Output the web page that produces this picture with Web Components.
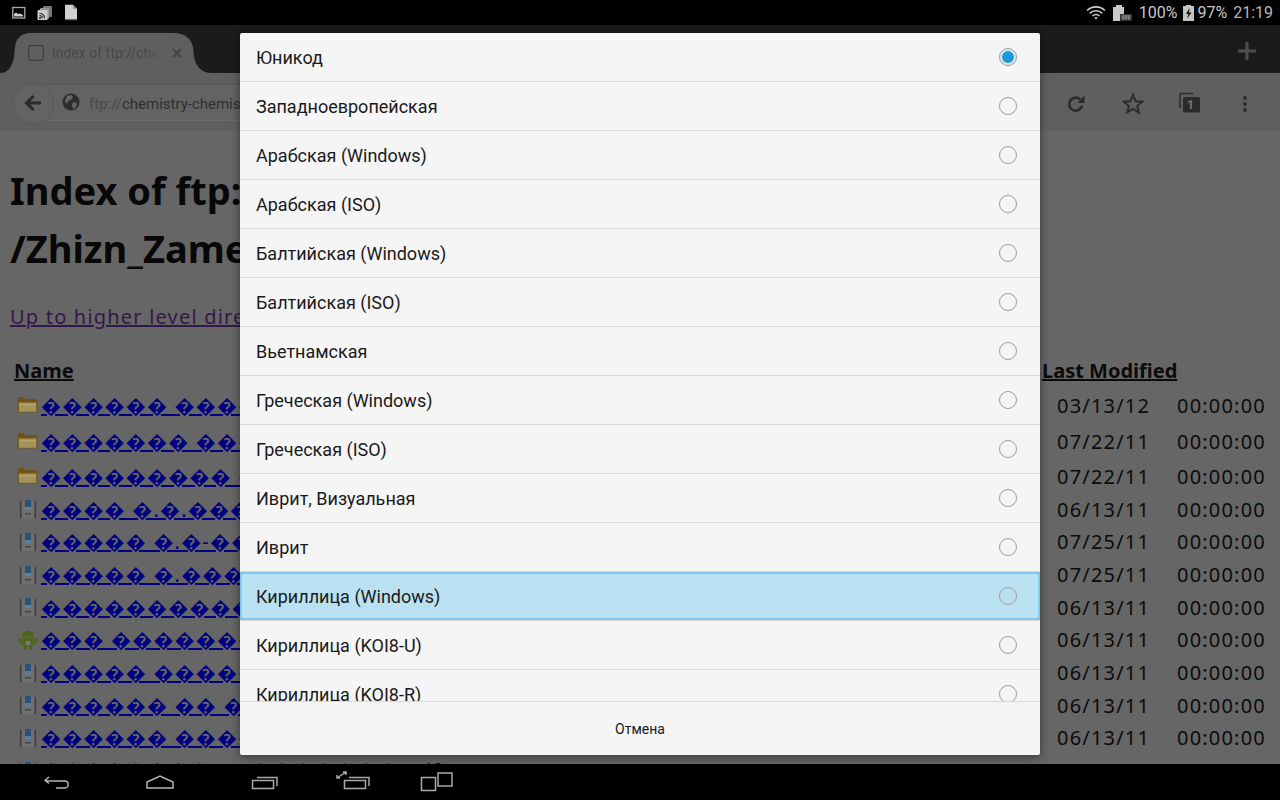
<!DOCTYPE html>
<html><head><meta charset="utf-8"><style>
html,body{margin:0;padding:0;width:1280px;height:800px;overflow:hidden;background:#000}
</style></head><body>
<android-screen></android-screen>
<script>
const sv=(w,h,b,s='')=>`<svg width="${w}" height="${h}" viewBox="0 0 ${w} ${h}" style="display:block;flex:none;${s}">${b}</svg>`;
const def=(n,html,fn)=>customElements.define(n,class extends HTMLElement{constructor(){super();this.attachShadow({mode:'open'}).innerHTML=html;}connectedCallback(){fn&&fn(this)}});
def('status-bar',`<style>:host{display:flex;height:25px;background:#000;color:#c8c8c8;align-items:center;font:16px Roboto,sans-serif;padding:0 7px 0 12px;box-sizing:border-box}
.l{display:flex;gap:11px;align-items:center}.r{margin-left:auto;display:flex;align-items:center}</style>
<div class="l">
${sv(14,14,'<rect x=".8" y="1.5" width="12" height="10.5" fill="none" stroke="#aaa" stroke-width="1.3"/><path d="M2 10.5V8l2-1.5 2 1.5 2-.5 3 1.5v1.5z" fill="#ccc"/>')}
${sv(16,16,'<rect x="6" y="1" width="9" height="11" rx="1" fill="#777"/><rect x="3" y="3" width="9" height="11" rx="1" fill="#999"/><rect x="0.5" y="5" width="10" height="10" rx="1" fill="#ccc"/><g fill="none" stroke="#222" stroke-width="1.1"><path d="M2.5 8.2a5 5 0 0 1 5 5"/><path d="M2.5 10.5a2.7 2.7 0 0 1 2.7 2.7"/></g><circle cx="3" cy="13" r="1" fill="#222"/>')}
${sv(14,17,'<path d="M1 .8h8l4 4v10.5H1z" fill="#d0d0d0"/><path d="M9 .8v4h4z" fill="#888"/><path d="M1 15.300h12v1H2z" fill="#777"/>')}
</div>
<div class="r">
${sv(20,14,'<g fill="none" stroke="#ccc" stroke-width="1.600"><path d="M1 4.500a13 13 0 0 1 18 0"/><path d="M3.800 7.300a9 9 0 0 1 12.400 0"/><path d="M6.500 10a5 5 0 0 1 7 0"/></g><path d="M8.500 11.800l1.500 1.800 1.500-1.800a2.200 2.200 0 0 0-3 0z" fill="#ccc"/>','margin-right:7px')}
${sv(19,17,'<path d="M0 3h3V1h6v2h2v14H0z" fill="#c9c9c9"/><rect x="7" y="10" width="12" height="7" fill="#333"/><path d="M8.500 12h9M8.500 14h9M10 11v5M13 11v5M16 11v5" stroke="#aaa" stroke-width=".8"/>','margin-right:7px')}
<span>100%</span>
${sv(11,16,'<path d="M0 1h3V0h5v1h3v15H0z" fill="#c4c4c4"/><path d="M6.500 3L3 9h2.500L4 14l4.500-6.500H6z" fill="#111"/>','margin:0 3px 0 6px')}
<span>97%</span><span style="margin-left:6px;color:#b5b5b5">21:19</span>
</div>`);
def('tab-strip',`<style>:host{display:block;height:48px;background:#1a1b1d;position:relative;box-sizing:border-box;padding-top:8px}
.row{display:flex;height:40px}
svg.shape{position:absolute;left:0;top:8px}
.tab{position:relative;display:flex;align-items:center;margin-left:28px;gap:8px;width:150px;height:40px;color:#474747;font:14px Roboto,sans-serif}
.t{width:108px;overflow:hidden;white-space:nowrap;-webkit-mask-image:linear-gradient(90deg,#000 85%,transparent);mask-image:linear-gradient(90deg,#000 85%,transparent);margin-left:0}
.plus{position:absolute;left:1237px;top:16px}</style>
<svg class="shape" width="214" height="40"><path d="M0 40C8 40 12 34 14 24L15 14C16 5 22 0 30 0H174C184 0 191 5 193 14L194 24C196 34 202 40 212 40Z" fill="#5f5f5f"/></svg>
<div class="row"><div class="tab">
<svg width="16" height="16" style="flex:none"><rect x=".7" y=".7" width="14.600" height="14.600" rx="2" fill="none" stroke="#404040" stroke-width="1.300"/></svg>
<span class="t">Index of ftp://chemistry</span>
<svg width="10" height="10" style="position:absolute;left:144px;top:15px;flex:none"><path d="M1 1l8 8M9 1l-8 8" stroke="#444" stroke-width="2"/></svg>
</div></div>
<svg class="plus" width="20" height="20"><path d="M10 1v18M1 10h18" stroke="#4e4e4e" stroke-width="3"/></svg>`);
def('tool-bar',`<style>:host{display:block;height:58px;background:#5f5f5f;position:relative}
.b{position:absolute;left:13px;top:10px;width:41px;height:41px;border-radius:50%;background:#636363;border:1px solid #595959;box-sizing:border-box}
.o{position:absolute;left:32px;top:11px;width:1000px;height:37px;border-top:1px solid #555;border-bottom:1px solid #6a6a6a;box-sizing:border-box;background:#636363}
.u{position:absolute;left:89px;top:22px;font:15px Roboto,sans-serif;color:#2e2e2e;white-space:nowrap}.u i{font-style:normal;color:#4a4a4a}
svg{position:absolute}</style>
<div class="o"></div><div class="b"></div>
<svg style="left:24px;top:21px" width="18" height="18"><path d="M17 9H3M9.500 2L2.500 9l7 7" fill="none" stroke="#2b2b2b" stroke-width="3"/></svg>
<svg style="left:62px;top:20px" width="18" height="18"><circle cx="9" cy="9" r="8.500" fill="#2d2d2d"/><path d="M5 3l4-1 2 2-2 3-3 1-1 3-2-3zM11 9l4 1-1 4-3 2-1-4z" fill="#666"/></svg>
<span class="u"><i>ftp://</i>chemistry-chemists.com</span>
<svg style="left:1066px;top:21px" width="20" height="20"><path d="M16 11.500a6.500 6.500 0 1 1-1.800-6" fill="none" stroke="#2b2b2b" stroke-width="2.600"/><path d="M18.500 1v8h-7z" fill="#2b2b2b"/></svg>
<svg style="left:1122px;top:20px" width="22" height="22"><path d="M11 2l2.600 6.200 6.700.5-5.100 4.300 1.600 6.500L11 16l-5.800 3.500 1.600-6.500L1.700 8.700l6.700-.5z" fill="none" stroke="#2b2b2b" stroke-width="2"/></svg>
<svg style="left:1179px;top:19px" width="22" height="22"><path d="M14 1.500H2.500A1.500 1.500 0 0 0 1 3v13" fill="none" stroke="#2b2b2b" stroke-width="1.500"/><rect x="4" y="5" width="17" height="15.500" rx="1.500" fill="#2b2b2b"/></svg>
<span style="position:absolute;left:1185px;top:25px;font:bold 12px Roboto,sans-serif;color:#777;width:11px;text-align:center">1</span>
<svg style="left:1242px;top:22px" width="6" height="18"><circle cx="3" cy="3" r="1.900" fill="#2b2b2b"/><circle cx="3" cy="9" r="1.900" fill="#2b2b2b"/><circle cx="3" cy="15" r="1.900" fill="#2b2b2b"/></svg>`);

const Q='\uFFFD';
const ic={folder:`<svg width="21" height="18" viewBox="0 0 21 18" style="display:block"><path d="M.5 16.500V3l1.500-2h5l1.500 2h10.500l1.500 1.500v12z" fill="#6e5418"/><path d="M1.800 15.800V6.500h17.500v9.300z" fill="#a39358"/><path d="M2 8h17v1.500H2z" fill="#b3a46a"/></svg>`,
file:`<svg width="18" height="20" viewBox="0 0 18 20" style="display:block"><rect x="1" y="2" width="1.400" height="17" fill="#3a3a3a"/><rect x="15.600" y="2" width="1.400" height="17" fill="#3a3a3a"/><rect x="3" y="2" width="12" height="17" fill="#6f6f6f"/><rect x="6" y="1" width="6" height="10" fill="#2a5278"/><path d="M6 8h6v3H6z" fill="#5b7f9c"/><rect x="6" y="14" width="6" height="1.500" fill="#474747"/></svg>`,
droid:`<svg width="20" height="20" viewBox="0 0 20 20" style="display:block"><g fill="#4f6418"><path d="M4 6.500a6 6 0 0 1 12 0z"/><rect x="4" y="7.500" width="12" height="8" rx="1"/><rect x="1" y="7.500" width="2.500" height="7" rx="1.200"/><rect x="16.500" y="7.500" width="2.500" height="7" rx="1.200"/><rect x="6" y="15" width="3" height="5"/><rect x="11" y="15" width="3" height="5"/></g><rect x="7.500" y="11" width="5" height="4" fill="#777"/></svg>`};
const files=[
['folder',Q.repeat(6)+' '+Q.repeat(12),'','03/13/12',36],
['folder',Q.repeat(7)+' '+Q.repeat(12),'','07/22/11',36],
['folder',Q.repeat(9)+' '+Q.repeat(12),'','07/22/11',34],
['file',Q.repeat(4)+' '+Q+'.'+Q+'.'+Q.repeat(12),'','06/13/11',32],
['file',Q.repeat(5)+' '+Q+'.'+Q+'-'+Q.repeat(12),'','07/25/11',33],
['file',Q.repeat(5)+' '+Q+'.'+Q.repeat(12),'','07/25/11',33],
['file',Q.repeat(9)+Q.repeat(12),'','06/13/11',32],
['droid',Q.repeat(3)+' '+Q.repeat(12),'','06/13/11',33],
['file',Q.repeat(5)+' '+Q.repeat(12),'','06/13/11',33],
['file',Q.repeat(6)+' '+Q.repeat(2)+' '+Q.repeat(10),'','06/13/11',32],
['file',Q.repeat(6)+' '+Q.repeat(12),'','06/13/11',33],
['file',Q.repeat(8)+'(90)'+Q.repeat(7)+'.pdf','2905 KB','06/13/11',33]];
def('ftp-row',`<style>:host{display:grid;grid-template-columns:27px 889px 127px 120px 1fr;align-items:center;font:20px "Noto Sans","DejaVu Sans",sans-serif;letter-spacing:1.2px;color:#0b0b0b;white-space:nowrap}
.i{display:flex;justify-content:center;padding-left:0}.n{color:#000080;text-decoration:underline;overflow:hidden}</style>
<div class="i"><slot name="icon"></slot></div><div class="n"><slot name="name"></slot></div><div><slot name="size"></slot></div><div><slot name="date"></slot></div><div><slot name="time"></slot></div>`);
def('ftp-page',`<style>:host{display:block;height:633px;background:#666;overflow:hidden;color:#0b0b0b;font-family:"Noto Sans","DejaVu Sans",sans-serif;padding:0 10px;box-sizing:border-box}
h1{font:bold 38px/58px "Noto Sans","Open Sans",sans-serif;margin:0;padding-top:30px;color:#080808;white-space:nowrap}
.up{display:block;margin-top:26px;font-size:20px;letter-spacing:1.2px;color:#35164d;text-decoration:underline;line-height:28px;white-space:nowrap}
.head{display:grid;grid-template-columns:1028px 1fr;margin:21px 0 0 4px;height:36px;align-items:center;font:bold 20px "Noto Sans",sans-serif;white-space:nowrap}
#rows{display:block;margin-left:4px;margin-top:-1px}
</style><h1>Index of ftp://chemistry-chemists.com<br>/Zhizn_Zamechatelnykh_Lyudei/</h1>
<span class="up">Up to higher level directory</span>
<div class="head"><span><u>Name</u></span><span><u>Last Modified</u></span></div>
<div id="rows"></div>`,el=>{
const r=el.shadowRoot.getElementById('rows');
files.forEach(f=>{const x=document.createElement('ftp-row');x.style.height=f[4]+'px';
x.innerHTML=`<span slot="icon">${ic[f[0]]}</span><span slot="name">${f[1]}</span><span slot="size">${f[2]}</span><span slot="date">${f[3]}</span><span slot="time">00:00:00</span>`;r.appendChild(x);});});
def('radio-row',`<style>:host{display:flex;flex:none;height:49px;box-sizing:border-box;align-items:center;padding:0 23px 0 16px;border-bottom:1px solid #d9d9d9;font:18px Roboto,sans-serif;color:#1a1a1a}
:host([hl]){background:#b9e1f1;box-shadow:inset 0 0 0 2px #80cbec;border-bottom-color:#d9d9d9}
.t{flex:1}.c{width:18px;height:18px;border-radius:50%;border:1px solid #9d9d9d;box-sizing:border-box;display:flex;align-items:center;justify-content:center}
:host([on]) .c{background:#d7ecf5}:host([on]) .c::after{content:"";width:12px;height:12px;border-radius:50%;background:#1b9ad6}
</style><span class="t"><slot></slot></span><span class="c"></span>`);
const items=['Юникод','Западноевропейская','Арабская (Windows)','Арабская (ISO)','Балтийская (Windows)','Балтийская (ISO)','Вьетнамская','Греческая (Windows)','Греческая (ISO)','Иврит, Визуальная','Иврит','Кириллица (Windows)','Кириллица (KOI8-U)','Кириллица (KOI8-R)'];
def('charset-dialog',`<style>:host{position:absolute;left:240px;top:33px;width:800px;height:722px;background:#f5f5f5;display:flex;flex-direction:column;border-radius:2px;box-shadow:0 2px 10px rgba(0,0,0,.45);font-family:Roboto,sans-serif}
#l{height:668px;overflow:hidden;display:flex;flex-direction:column;border-bottom:1px solid #d9d9d9;flex:none}
.b{flex:1;display:flex;align-items:center;justify-content:center;font-size:14px;color:#1a1a1a}</style>
<div id="l"></div><div class="b">Отмена</div>`,el=>{const l=el.shadowRoot.getElementById('l');
items.forEach((t,i)=>{const x=document.createElement('radio-row');x.textContent=t;if(i==0)x.setAttribute('on','');if(i==11)x.setAttribute('hl','');l.appendChild(x);});});
def('nav-bar',`<style>:host{display:block;height:36px;background:#000;position:relative}svg{position:absolute;top:0}</style>
<svg style="left:42px" width="30" height="36" fill="none" stroke="#b5b5b5" stroke-width="1.400"><path d="M7 13l-4 3.500 4 3M3 17h20c4 0 4.500 7 0 7H14"/></svg>
<svg style="left:145px" width="30" height="36" fill="none" stroke="#b5b5b5" stroke-width="1.500"><path d="M2 24V18L15 12l13 6v6z"/></svg>
<svg style="left:250px" width="30" height="36" fill="none" stroke="#a9a9a9" stroke-width="1.500"><rect x="2.500" y="16.500" width="21" height="8"/><path d="M7 13.500h20V22"/></svg>
<svg style="left:335px" width="36" height="36" fill="none" stroke="#a9a9a9" stroke-width="1.500"><path d="M2 14l9-6M2 11v3h3M8 8h3v3"/><rect x="9.500" y="16.500" width="21" height="8"/><path d="M14 13.500h20V22" /></svg>
<svg style="left:420px" width="36" height="36" fill="none" stroke="#a9a9a9" stroke-width="1.500"><rect x="1.500" y="13.500" width="14" height="13"/><rect x="18" y="9" width="14" height="13"/></svg>`);
def('android-screen',`<style>:host{display:block;position:relative;width:1280px;height:800px;overflow:hidden;background:#000}</style>
<status-bar></status-bar><tab-strip></tab-strip><tool-bar></tool-bar><ftp-page></ftp-page><nav-bar></nav-bar><charset-dialog></charset-dialog>`);
</script></body></html>
